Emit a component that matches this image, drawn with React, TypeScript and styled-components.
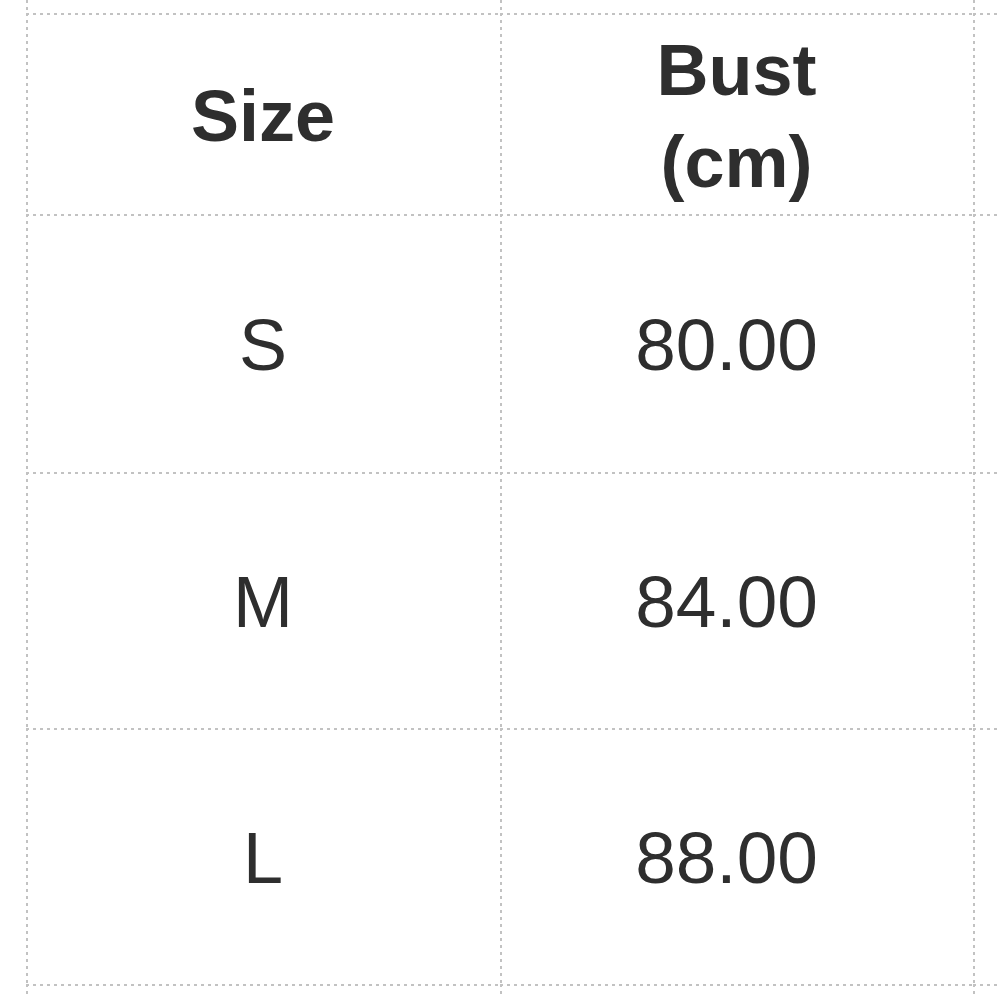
import React from "react";
import styled, { createGlobalStyle } from "styled-components";

const Global = createGlobalStyle`
  html, body { margin: 0; padding: 0; background: #ffffff; }
  body { font-family: "Liberation Sans", Arial, sans-serif; }
`;

const Frame = styled.div`
  width: 1000px;
  height: 998px;
  overflow: hidden;
  background: #ffffff;
  padding-left: 26px;
  box-sizing: border-box;
`;

const Sheet = styled.div`
  display: grid;
  grid-template-columns: 474px 473px 200px;
  grid-template-rows: 13px 201px 258px 256px 256px 120px;
`;

const Cell = styled.div<{ $head?: boolean; $num?: boolean; $stub?: boolean }>`
  display: flex;
  align-items: center;
  justify-content: center;
  text-align: center;
  box-sizing: border-box;
  color: #2e2e2e;
  font-family: "Liberation Sans", Arial, sans-serif;
  font-size: ${(p) => (p.$num ? "73px" : "72px")};
  font-weight: ${(p) => (p.$head ? 700 : 400)};
  line-height: ${(p) => (p.$head ? "92px" : "84px")};
  padding-top: ${(p) => (p.$head ? "4px" : "4px")};
  padding-right: ${(p) => (p.$num ? "20px" : "0")};
  background-image:
    linear-gradient(to right, ${(p) => (p.$stub ? "transparent" : "#c2c2c2")} 3px, transparent 3px),
    linear-gradient(to bottom, #c2c2c2 3px, transparent 3px);
  background-size: 7px 2px, 2px 7px;
  background-repeat: repeat-x, repeat-y;
  background-position: 0 0, 0 0;
`;

const rows: [string, string][] = [
  ["S", "80.00"],
  ["M", "84.00"],
  ["L", "88.00"],
];

export default function App() {
  return (
    <>
      <Global />
      <Frame>
        <Sheet>
          <Cell $stub />
          <Cell $stub />
          <Cell $stub />
          <Cell $head>Size</Cell>
          <Cell $head>
            Bust
            <br />
            (cm)
          </Cell>
          <Cell />
          {rows.map(([size, bust]) => (
            <React.Fragment key={size}>
              <Cell>{size}</Cell>
              <Cell $num>{bust}</Cell>
              <Cell />
            </React.Fragment>
          ))}
          <Cell />
          <Cell />
          <Cell />
        </Sheet>
      </Frame>
    </>
  );
}
